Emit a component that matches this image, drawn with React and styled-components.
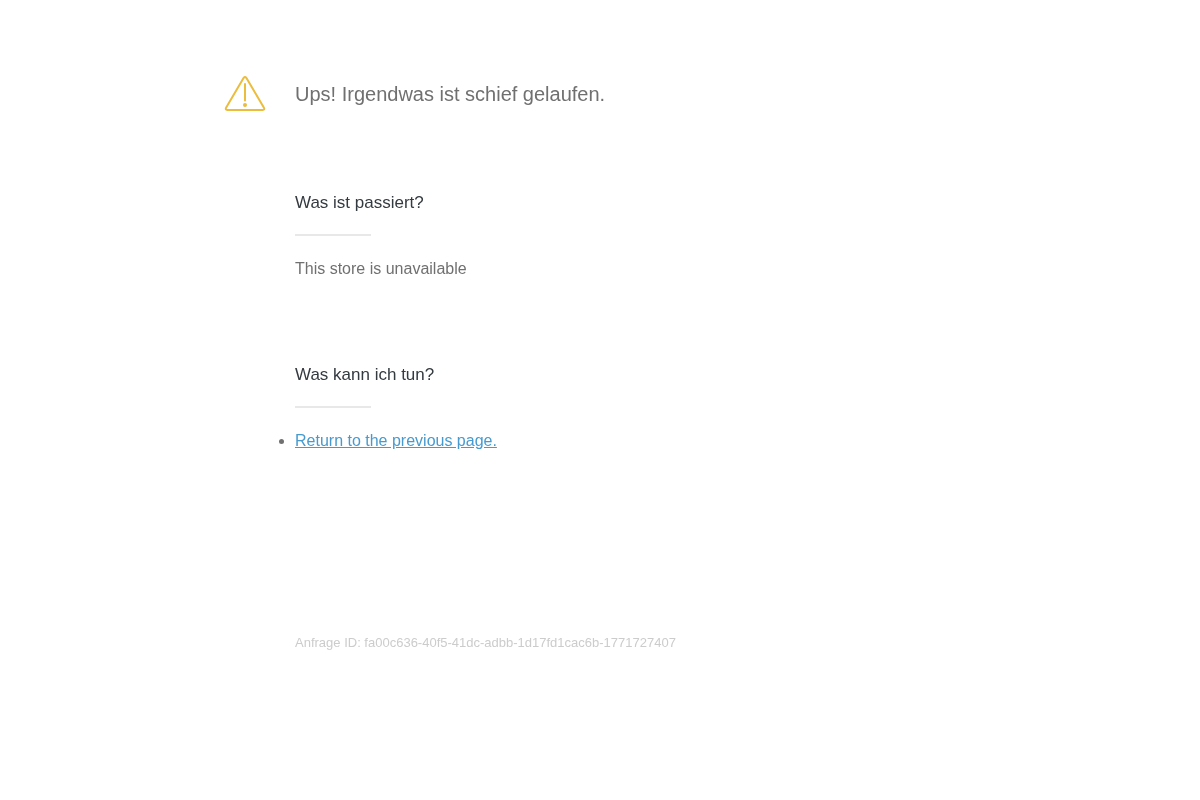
import React from 'react'
import styled, { createGlobalStyle } from 'styled-components'

const GlobalStyle = createGlobalStyle`
  html, body {
    margin: 0;
    padding: 0;
    background: #fff;
  }
  body {
    font-family: "Liberation Sans", Arial, sans-serif;
    color: #707070;
  }
`

const WarningIcon = () => (
  <svg width="42" height="38" viewBox="0 0 42 38" fill="none">
    <path
      d="M19.7 2.8 Q21 1 22.3 2.8 L39.8 32.6 Q41.1 35 38.6 35 L3.4 35 Q0.9 35 2.2 32.6 Z"
      stroke="#ecbc3c"
      strokeWidth="2"
      strokeLinejoin="round"
    />
    <path d="M21 9 V25.5" stroke="#ecbc3c" strokeWidth="2" strokeLinecap="round" />
    <circle cx="21" cy="30" r="2" fill="#ecbc3c" />
  </svg>
)

const App = () => (
  <>
    <GlobalStyle />
    <Page>
      <Header>
        <IconSlot>
          <WarningIcon />
        </IconSlot>
        <Title>Ups! Irgendwas ist schief gelaufen.</Title>
      </Header>

      <Section $top={78}>
        <Heading>Was ist passiert?</Heading>
        <Rule />
        <Text>This store is unavailable</Text>
      </Section>

      <Section $top={82}>
        <Heading>Was kann ich tun?</Heading>
        <Rule />
        <List>
          <li>
            <BackLink href="#">Return to the previous page.</BackLink>
          </li>
        </List>
      </Section>

      <RequestId>Anfrage ID: fa00c636-40f5-41dc-adbb-1d17fd1cac6b-1771727407</RequestId>
    </Page>
  </>
)

const Page = styled.main`
  display: flex;
  flex-direction: column;
  padding: 75px 0 0 224px;
  will-change: opacity;
`

const Header = styled.header`
  display: flex;
  align-items: center;
  height: 38px;
`

const IconSlot = styled.div`
  display: flex;
  width: 71px;
`

const Title = styled.h1`
  margin: 0;
  font-size: 20px;
  line-height: 38px;
  font-weight: 400;
  color: #707070;
`

const Section = styled.section`
  margin: ${props => props.$top}px 0 0 71px;
`

const Heading = styled.h2`
  margin: 0;
  font-size: 17px;
  line-height: 24px;
  font-weight: 400;
  color: #333a40;
`

const Rule = styled.hr`
  width: 76px;
  height: 2px;
  margin: 19px 0 0;
  border: 0;
  background: #e8e8e8;
`

const Text = styled.p`
  margin: 21px 0 0;
  font-size: 16px;
  line-height: 24px;
  color: #707070;
`

const List = styled.ul`
  margin: 21px 0 0;
  padding: 0;
  font-size: 16px;
  line-height: 24px;
  color: #707070;
`

const BackLink = styled.a`
  color: #479acf;
`

const RequestId = styled.p`
  margin: 181px 0 0 71px;
  font-size: 13px;
  line-height: 18px;
  color: #cccccc;
`

export default App
